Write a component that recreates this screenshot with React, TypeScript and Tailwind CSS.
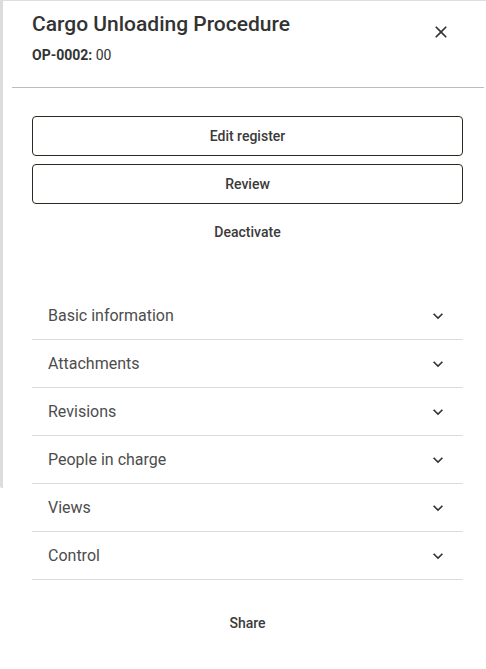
const sections = [
  "Basic information",
  "Attachments",
  "Revisions",
  "People in charge",
  "Views",
  "Control",
];

function CloseIcon() {
  return (
    <svg viewBox="0 0 24 24" className="h-5 w-5" fill="currentColor">
      <path d="M19 6.41L17.59 5 12 10.59 6.41 5 5 6.41 10.59 12 5 17.59 6.41 19 12 13.41 17.59 19 19 17.59 13.41 12z" />
    </svg>
  );
}

function ExpandIcon() {
  return (
    <svg viewBox="0 0 24 24" className="h-5 w-5" fill="currentColor">
      <path d="M16.59 8.59L12 13.17 7.41 8.59 6 10l6 6 6-6z" />
    </svg>
  );
}

export default function App() {
  return (
    <div
      className="flex h-[669px] w-[486px] bg-white text-[#333]"
      style={{ fontFamily: "Roboto, 'Noto Sans', sans-serif" }}
    >
      {/* panel edge behind the drawer */}
      <div className="h-[488px] w-[3px] shrink-0 rounded-bl-[2px] bg-[#dcdcdc]" />

      <div className="flex flex-1 flex-col border-t border-[#dedede]">
        {/* header */}
        <div className="flex items-start justify-between pl-[29px] pr-[35px] pt-[9px]">
          <div>
            <h1 className="text-[21px] font-medium leading-[28px] text-[#333]">
              Cargo Unloading Procedure
            </h1>
            <p className="mt-[7px] text-[14px] leading-[20px] text-[#333]">
              <span className="font-bold">OP-0002:</span> 00
            </p>
          </div>
          <button className="mt-[12px] text-[#333]">
            <CloseIcon />
          </button>
        </div>

        <div className="ml-[9px] mr-[2px] mt-[22px] h-px bg-[#bdbdbd]" />

        {/* actions */}
        <div className="mt-[28px] flex flex-col gap-2 pl-[29px] pr-[23px]">
          <button className="h-10 rounded-[4px] border border-[#2a2a22] text-[14px] font-medium text-[#3a3a3a]">
            Edit register
          </button>
          <button className="h-10 rounded-[4px] border border-[#2a2a22] text-[14px] font-medium text-[#3a3a3a]">
            Review
          </button>
          <button className="h-10 text-[14px] font-medium text-[#3a3a3a]">
            Deactivate
          </button>
        </div>

        {/* sections */}
        <div className="mt-[40px] flex flex-col pl-[29px] pr-[23px]">
          {sections.map((s) => (
            <div
              key={s}
              className="flex h-12 items-center justify-between border-b border-[#dcdcdc] pl-4 pr-[15px]"
            >
              <span className="text-[16px] text-[#4d4d4d]">{s}</span>
              <span className="text-[#333]">
                <ExpandIcon />
              </span>
            </div>
          ))}
        </div>

        <div className="mt-[23px] flex justify-center pl-[29px] pr-[23px]">
          <button className="h-10 px-4 text-[14px] font-medium text-[#3a3a3a]">
            Share
          </button>
        </div>
      </div>
    </div>
  );
}
